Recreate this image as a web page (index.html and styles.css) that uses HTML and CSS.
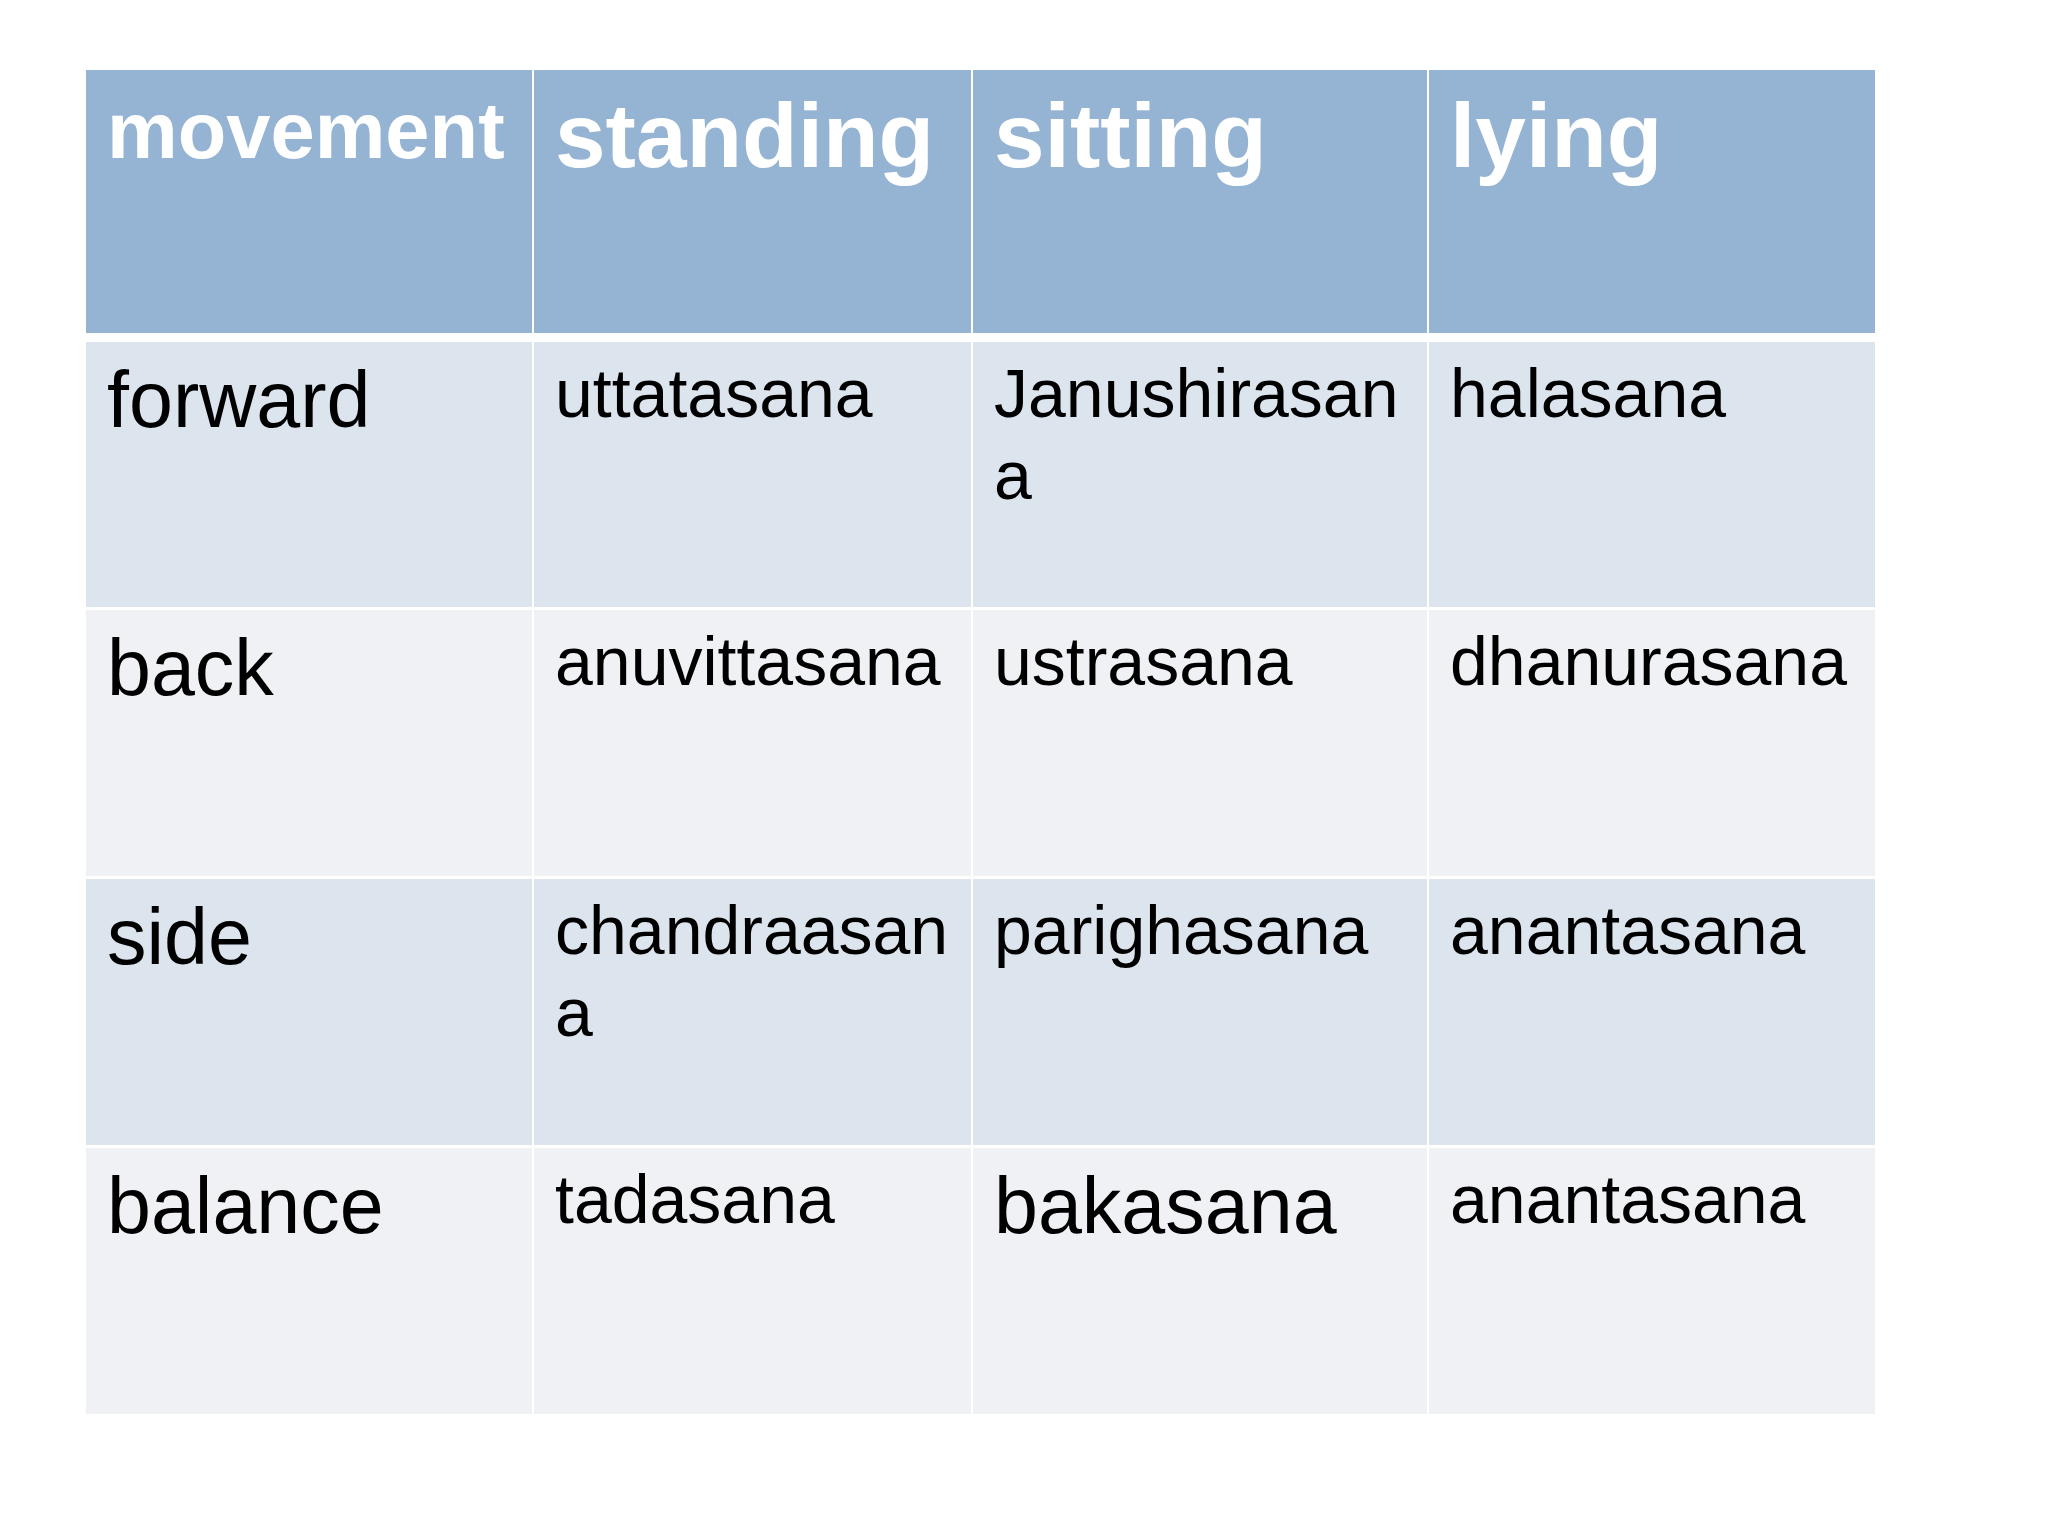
FILE: index.html
```html
<!DOCTYPE html>
<html lang="en">
<head>
<meta charset="utf-8">
<title>Yoga asanas by movement</title>
<link rel="stylesheet" href="styles.css">
</head>
<body>
<div class="table">
  <div class="row head">
    <div class="cell first">movement</div>
    <div class="cell">standing</div>
    <div class="cell">sitting</div>
    <div class="cell">lying</div>
  </div>
  <div class="row odd first-row">
    <div class="cell label">forward</div>
    <div class="cell">uttatasana</div>
    <div class="cell">Janushirasana</div>
    <div class="cell">halasana</div>
  </div>
  <div class="row even">
    <div class="cell label">back</div>
    <div class="cell">anuvittasana</div>
    <div class="cell">ustrasana</div>
    <div class="cell">dhanurasana</div>
  </div>
  <div class="row odd">
    <div class="cell label">side</div>
    <div class="cell">chandraasana</div>
    <div class="cell">parighasana</div>
    <div class="cell">anantasana</div>
  </div>
  <div class="row even">
    <div class="cell label">balance</div>
    <div class="cell">tadasana</div>
    <div class="cell label">bakasana</div>
    <div class="cell">anantasana</div>
  </div>
</div>
</body>
</html>
```
FILE: styles.css
```css
html, body {
  margin: 0;
  padding: 0;
  background: #ffffff;
}

body {
  width: 2048px;
  height: 1536px;
  padding: 70px 0 0 86px;
  box-sizing: border-box;
  font-family: "Liberation Sans", Arial, sans-serif;
  color: #000000;
}

.table {
  display: flex;
  flex-direction: column;
  gap: 3px;
  width: 1789px;
}

.row {
  display: grid;
  grid-template-columns: 446px 437px 454px 446px;
  column-gap: 2px;
  height: 266px;
}

.row.first-row {
  height: 265px;
}

.cell {
  padding: 10px 15px 0 21px;
  font-size: 68px;
  line-height: 82px;
  overflow-wrap: anywhere;
}

.head {
  height: 263px;
  margin-bottom: 6px;
}

.head .cell {
  background: #95b3d3;
  color: #ffffff;
  font-weight: bold;
  font-size: 91px;
  line-height: 108px;
  padding-top: 12px;
}

.head .cell.first {
  font-size: 79.5px;
  line-height: 96px;
  padding-top: 13px;
}

.odd .cell {
  background: #dce4ed;
}

.even .cell {
  background: #eff1f5;
}

.cell.label {
  font-size: 79px;
  line-height: 95px;
}
```
